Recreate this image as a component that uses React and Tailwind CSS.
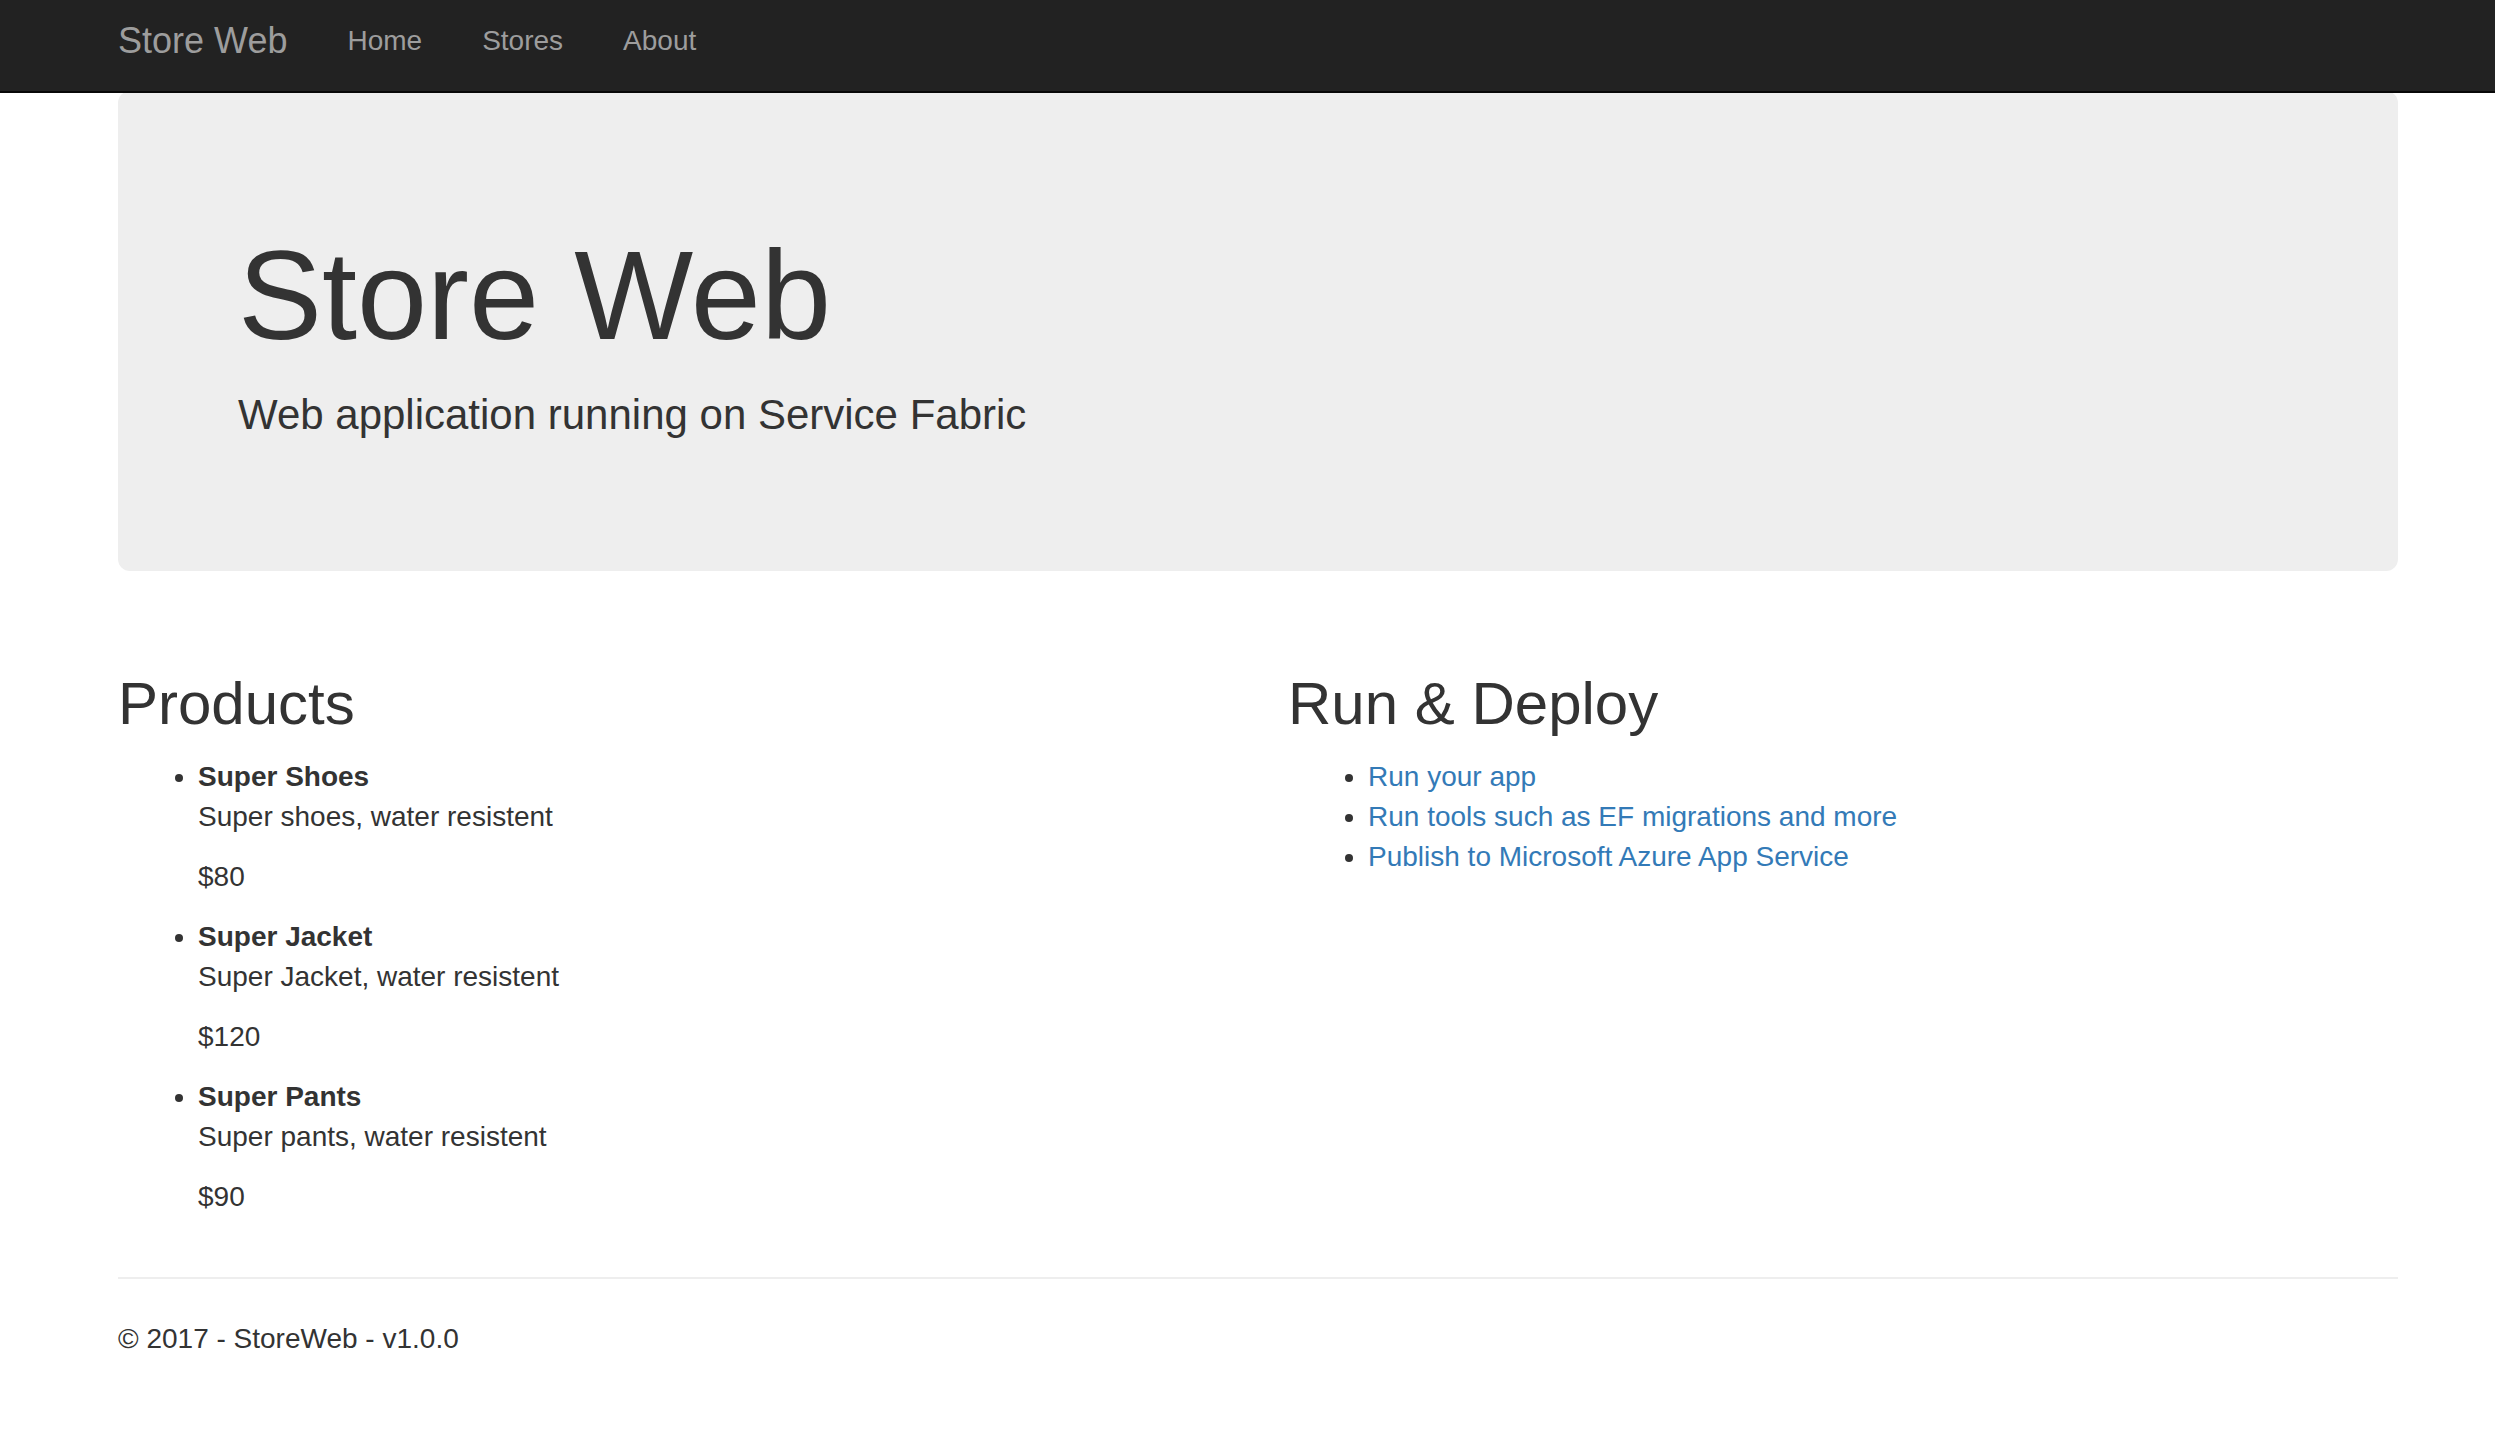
export default function App() {
  const products = [
    ["Super Shoes", "Super shoes, water resistent", "$80"],
    ["Super Jacket", "Super Jacket, water resistent", "$120"],
    ["Super Pants", "Super pants, water resistent", "$90"],
  ];
  const links = ["Run your app", "Run tools such as EF migrations and more", "Publish to Microsoft Azure App Service"];
  return (
    <div className="min-h-screen bg-white font-['Liberation_Sans',Arial,sans-serif] text-[28px] leading-[40px] text-[#333333]">
      <nav className="relative z-10 border-b-2 border-[#080808] bg-[#222222] pr-[97px] pb-[9px] pl-[118px] text-[#9d9d9d]">
        <div className="flex h-[82px] items-center gap-[60px]">
          <a href="#" className="text-[36px]">Store Web</a>
          <a href="#">Home</a>
          <a href="#">Stores</a>
          <a href="#">About</a>
        </div>
      </nav>
      <div className="-mt-[2px] pr-[97px] pl-[118px]">
        <header className="rounded-[12px] bg-[#eeeeee] px-[120px] pt-[136px] pb-[126px]">
          <h1 className="text-[126px] leading-[138px]">Store Web</h1>
          <p className="mt-5 text-[42px] leading-[60px]">Web application running on Service Fabric</p>
        </header>
        <main className="grid grid-cols-2 gap-[60px] pt-[100px]">
          <section>
            <h2 className="text-[60px] leading-[66px]">Products</h2>
            <ul className="mt-5 list-disc pl-20">
              {products.map(([name, text, price]) => (
                <li key={name}>
                  <strong>{name}</strong>
                  <p>{text}</p>
                  <p className="my-5">{price}</p>
                </li>
              ))}
            </ul>
          </section>
          <section>
            <h2 className="text-[60px] leading-[66px]">Run &amp; Deploy</h2>
            <ul className="mt-5 list-disc pl-20">
              {links.map((l) => (
                <li key={l}><a href="#" className="text-[#337ab7]">{l}</a></li>
              ))}
            </ul>
          </section>
        </main>
        <hr className="mt-10 border-t-2 border-[#eeeeee]" />
        <footer className="py-10"><p>© 2017 - StoreWeb - v1.0.0</p></footer>
      </div>
    </div>
  );
}
